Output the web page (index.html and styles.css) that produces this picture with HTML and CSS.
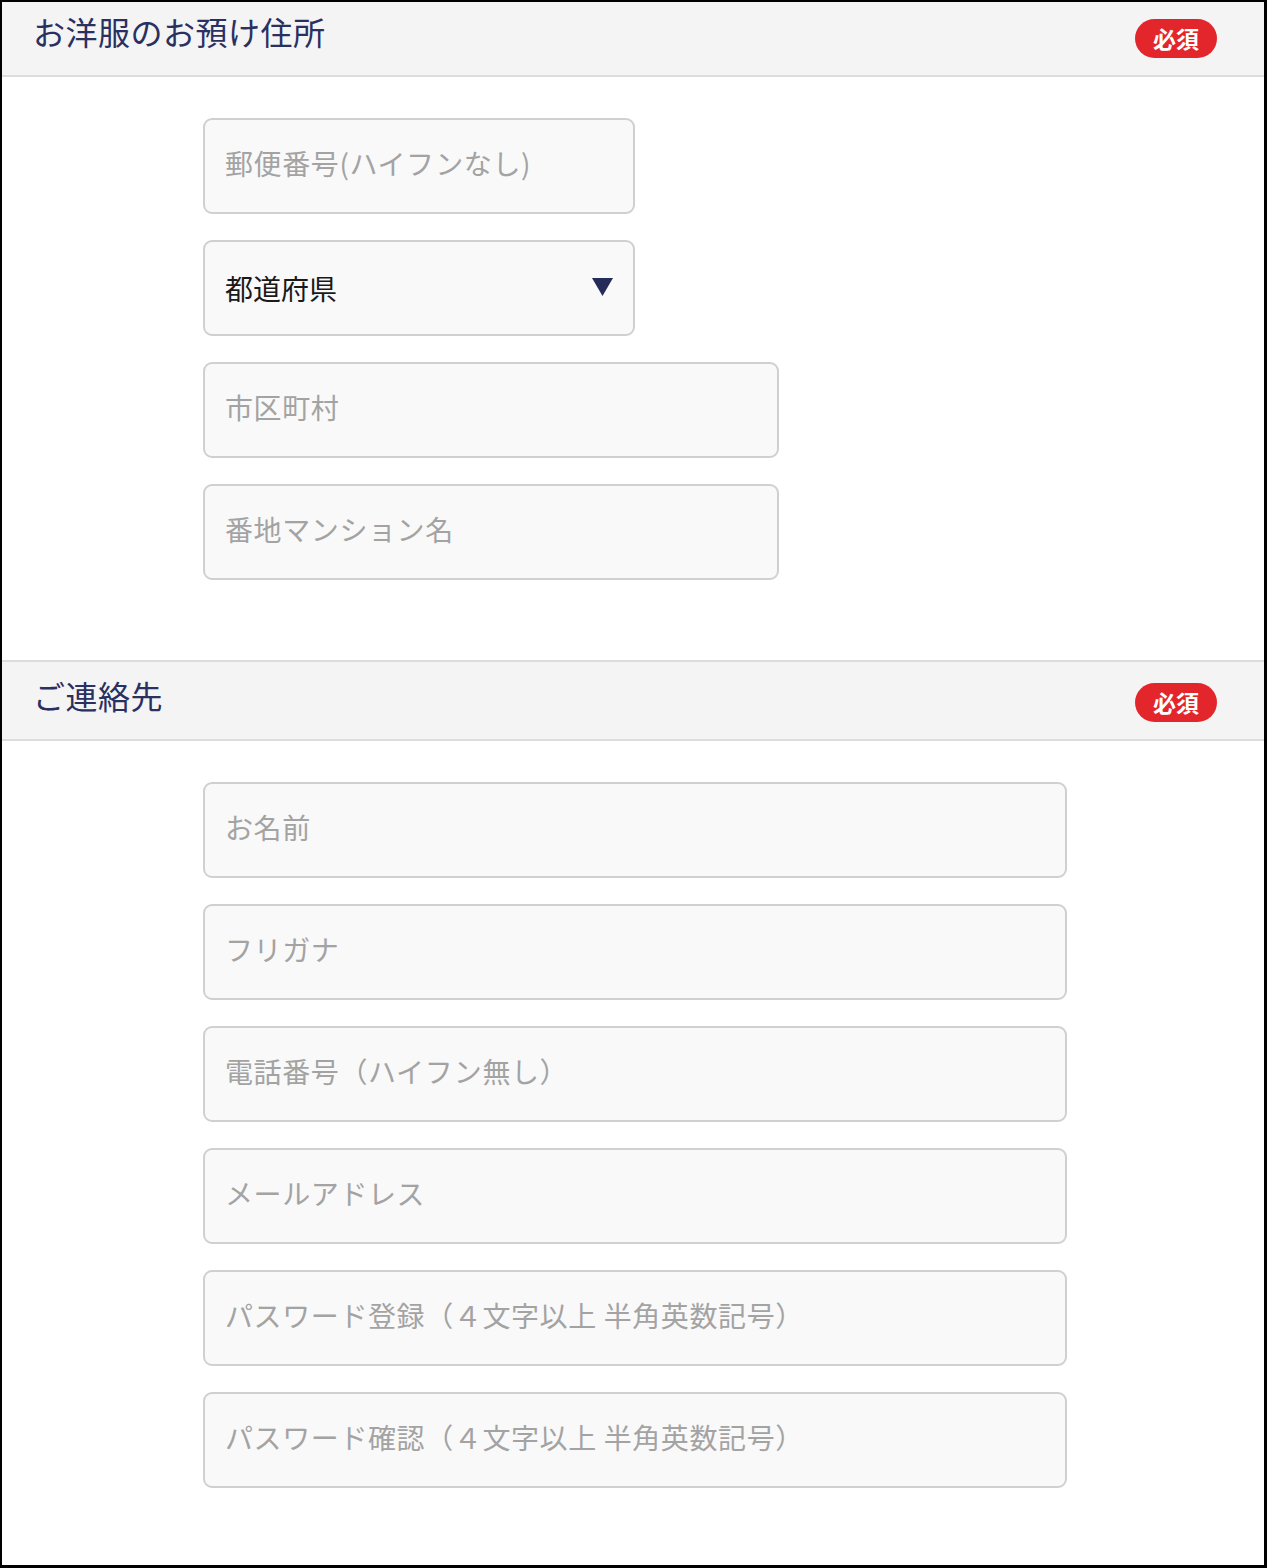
FILE: index.html
```html
<!DOCTYPE html>
<html lang="ja">
<head>
<meta charset="utf-8">
<title>お洋服のお預け住所</title>
<link rel="stylesheet" href="styles.css">
</head>
<body>
<div class="frame">
  <section class="block block--first">
    <header class="block-head">
      <h2 class="block-title">お洋服のお預け住所</h2>
      <span class="badge">必須</span>
    </header>
    <div class="block-body">
      <input class="field field--half" type="text" placeholder="郵便番号(ハイフンなし)">
      <div class="select-wrap field--half">
        <select class="field field--select">
          <option>都道府県</option>
        </select>
        <svg class="select-arrow" width="21" height="18" viewBox="0 0 21 18"><polygon points="0,0 21,0 10.5,18" fill="#262c58"/></svg>
      </div>
      <input class="field field--twothird" type="text" placeholder="市区町村">
      <input class="field field--twothird" type="text" placeholder="番地マンション名">
    </div>
  </section>
  <section class="block">
    <header class="block-head block-head--bordered">
      <h2 class="block-title">ご連絡先</h2>
      <span class="badge">必須</span>
    </header>
    <div class="block-body">
      <input class="field field--full" type="text" placeholder="お名前">
      <input class="field field--full" type="text" placeholder="フリガナ">
      <input class="field field--full" type="tel" placeholder="電話番号（ハイフン無し）">
      <input class="field field--full" type="email" placeholder="メールアドレス">
      <input class="field field--full" type="password" placeholder="パスワード登録（４文字以上 半角英数記号）">
      <input class="field field--full" type="password" placeholder="パスワード確認（４文字以上 半角英数記号）">
    </div>
  </section>
</div>
</body>
</html>
```
FILE: styles.css
```css
* { box-sizing: border-box; }
html, body { margin: 0; padding: 0; background: #fff; }
body {
  font-family: "Noto Sans CJK JP", "Noto Sans", sans-serif;
  width: 1267px;
}
.frame {
  width: 1267px;
  height: 1568px;
  border-style: solid;
  border-color: #000;
  border-width: 2px 3px 3px 2px;
  overflow: hidden;
  background: #fff;
}
.block-head {
  display: flex;
  align-items: center;
  justify-content: space-between;
  height: 79px;
  padding: 0 47px 0 31px;
  background: #f4f4f4;
  border-bottom: 2px solid #dcdcdc;
}
.block--first .block-head { margin-top: -4px; }
.block-head--bordered {
  height: 81px;
  border-top: 2px solid #dcdcdc;
}
.block-title {
  margin: 0 0 11px 0;
  font-size: 32px;
  line-height: 1;
  font-weight: 400;
  color: #2a3060;
  letter-spacing: 0.5px;
}
.badge {
  display: inline-flex;
  align-items: center;
  justify-content: center;
  width: 82px;
  height: 39px;
  margin-top: 4px;
  border-radius: 20px;
  background: #e3262b;
  color: #fff;
  font-size: 23px;
  font-weight: 700;
  line-height: 1;
}
.block-body {
  display: flex;
  flex-direction: column;
  align-items: flex-start;
  gap: 26px;
  padding: 41px 0 80px 201px;
}
.field {
  display: block;
  height: 96px;
  padding: 0 20px 6px 20px;
  margin: 0;
  border: 2px solid #d0d0d0;
  border-radius: 9px;
  background: #f9f9f9;
  font-family: "Noto Sans CJK JP", "Noto Sans", sans-serif;
  font-size: 28px;
  letter-spacing: 0.6px;
  color: #222;
  outline: none;
}
.field::placeholder { color: #a3a3a3; opacity: 1; }
.field--half { width: 432px; }
.field--twothird { width: 576px; }
.field--full { width: 864px; }
.select-wrap {
  position: relative;
  height: 96px;
}
.field--select {
  width: 100%;
  padding-bottom: 0;
  -webkit-appearance: none;
  appearance: none;
  color: #1a1a1a;
  letter-spacing: 0;
}
.select-arrow {
  position: absolute;
  right: 22px;
  top: 38px;
  pointer-events: none;
}
```
